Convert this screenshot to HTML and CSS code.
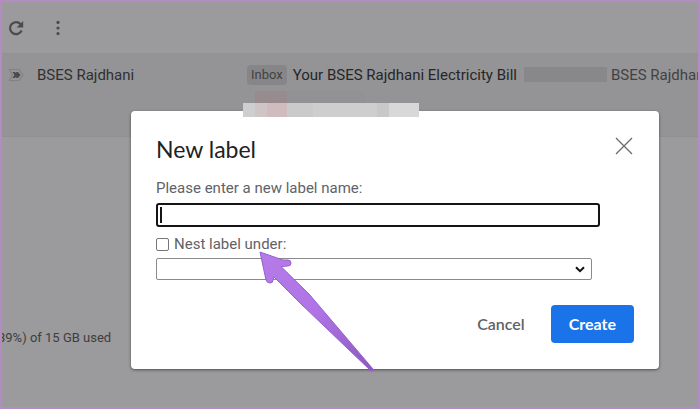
FILE: index.html
```
<!DOCTYPE html>
<html lang="en">
<head>
    <meta charset="UTF-8">
    <meta name="viewport" content="width=device-width, initial-scale=1.0">
    <title>New label</title>
    <link rel="stylesheet" href="styles.css">
</head>
<body>
    <div class="mail">
        <div class="toolbar">
            <button class="icon-button" type="button" aria-label="Refresh">
                <svg width="16" height="16" viewBox="0 0 16 16" fill="none">
                    <path d="M12.600 4.200A6 6 0 1 0 13.600 10.500" stroke="#4b4a4c" stroke-width="2.200"/>
                    <path d="M15.200 1v6.500H8.700z" fill="#4b4a4c"/>
                </svg>
            </button>
            <button class="icon-button" type="button" aria-label="More">
                <svg width="4" height="16" viewBox="0 0 4 16" fill="#4b4a4c">
                    <circle cx="2" cy="2.4" r="1.6"/>
                    <circle cx="2" cy="8" r="1.6"/>
                    <circle cx="2" cy="13.6" r="1.6"/>
                </svg>
            </button>
        </div>

        <div class="mail-row">
            <svg class="marker" width="16" height="14" viewBox="0 0 16 14" fill="none">
                <path d="M1.500 1.500h9.500L15 7l-4 5.500H1.500L4.500 7z" stroke="#828183" stroke-width="1.200"/>
                <path d="M4.500 4H7l1.200 1.500V4h1.800l2.500 3-2.500 3H8.200V8.500L7 10H4.500l2-3z" fill="#4b4a4c"/>
            </svg>
            <span class="sender">BSES Rajdhani</span>
            <span class="tag">Inbox</span>
            <span class="subject">Your BSES Rajdhani Electricity Bill</span>
            <span class="redacted"></span>
            <span class="snippet">BSES Rajdhani</span>
        </div>

        <div class="storage">39%) of 15 GB used</div>
    </div>

    <form class="dialog" role="dialog" aria-labelledby="dialog-title">
        <div class="dialog-header">
            <h1 id="dialog-title">New label</h1>
            <button class="icon-button" type="button" aria-label="Close">
                <svg width="18" height="18" viewBox="0 0 18 18" stroke="#6b6b6e" stroke-width="1.3">
                    <path d="M1 1l16 16M17 1L1 17"/>
                </svg>
            </button>
        </div>

        <label class="name-label" for="label-name">Please enter a new label name:</label>
        <div class="name-field">
            <input type="text" id="label-name" class="name-input">
            <span class="caret"></span>
        </div>

        <div class="nest">
            <input type="checkbox" id="nest" class="nest-check">
            <label for="nest">Nest label under:</label>
        </div>
        <div class="parent-field">
            <select class="parent-select" aria-label="Parent label">
                <option></option>
            </select>
            <svg class="chevron" width="10" height="7" viewBox="0 0 10 7" fill="none" stroke="#111" stroke-width="2">
                <path d="M1 1.200l4 4 4-4"/>
            </svg>
        </div>

        <div class="actions">
            <button class="btn" type="button">Cancel</button>
            <button class="btn btn-primary" type="button">Create</button>
        </div>
    </form>

    <!-- pixelated second line of the message -->
    <svg class="pixelated" width="176" height="26" viewBox="0 0 176 26" shape-rendering="crispEdges">
        <rect x="12" width="32" height="12" fill="#978b8d"/>
        <rect x="44" width="78" height="12" fill="#929294"/>
        <rect y="12" width="176" height="14" fill="#cececf"/>
        <rect x="12" y="12" width="12" height="14" fill="#cfc4c6"/>
        <rect x="24" y="12" width="20" height="14" fill="#d0bbbe"/>
        <rect x="44" y="12" width="26" height="14" fill="#cbcacb"/>
        <rect x="134" y="12" width="12" height="14" fill="#c8c8c9"/>
        <rect x="146" y="12" width="30" height="14" fill="#d8d8d9"/>
    </svg>

    <svg class="arrow" width="116" height="122" viewBox="0 0 116 122">
        <defs>
            <linearGradient id="arrow-fill" x1="0" y1="0" x2="1" y2="1">
                <stop offset="0" stop-color="#b57be8"/>
                <stop offset="0.500" stop-color="#b074e6"/>
                <stop offset="1" stop-color="#8a59bd"/>
            </linearGradient>
        </defs>
        <path d="M1 1L24 9L29 9Q32 9 32 12Q32 15 29 15L22 15.500L50 43L114 118Q115 121 112 120L40 51L15 26L14 29Q14 32 11 32Q8 32 7 29Z" fill="url(#arrow-fill)" stroke="#9760cd" stroke-width="1"/>
    </svg>
</body>
</html>
```

FILE: styles.css
```
* {
    box-sizing: border-box;
}
body {
    margin: 0;
    position: relative;
    font-family: Roboto, sans-serif;
    color: #5f6368;
    background-color: #9b9a9c;
}
.mail {
    display: flex;
    flex-direction: column;
    min-height: 100vh;
    border: 2px solid #b38cc4;
    overflow: hidden;
}
.toolbar {
    display: flex;
    align-items: center;
    gap: 32px;
    height: 51px;
    padding-left: 6px;
}
.icon-button {
    display: flex;
    padding: 0;
    border: none;
    background: none;
    cursor: pointer;
}
.mail-row {
    display: flex;
    align-items: flex-start;
    height: 84px;
    padding: 12px 0 0 6px;
    background-color: #949496;
    border-bottom: 1px solid #919193;
    font-size: 15px;
    line-height: 20px;
    white-space: nowrap;
}
.marker {
    margin-top: 3px;
    flex-shrink: 0;
}
.sender {
    width: 210px;
    margin-left: 13px;
    color: #303032;
    flex-shrink: 0;
}
.tag {
    padding: 0 4px;
    border-radius: 4px;
    background-color: #868688;
    color: #424244;
    font-size: 13px;
}
.subject {
    margin-left: 6px;
    color: #262628;
}
.redacted {
    width: 83px;
    height: 15px;
    margin: 2px 4px 0 7px;
    background-color: #88888a;
    flex-shrink: 0;
}
.snippet {
    color: #424244;
}
.storage {
    margin-top: auto;
    margin-bottom: 61px;
    margin-left: -4px;
    color: #3e3e40;
    font-size: 13px;
    line-height: 16px;
}
.dialog {
    position: absolute;
    top: 111px;
    left: 131px;
    right: 41px;
    padding: 24px 25px 26px;
    border-radius: 4px;
    background-color: #fff;
    box-shadow: 0 1px 3px rgba(0, 0, 0, 0.5);
    font-size: 15px;
}
.dialog-header {
    display: flex;
    align-items: flex-start;
    justify-content: space-between;
}
h1 {
    margin: 0;
    color: #202124;
    font-family: Lato, sans-serif;
    font-size: 23px;
    font-weight: 400;
    line-height: 28px;
}
.dialog-header .icon-button {
    padding: 2px 1px 0 0;
}
.name-label {
    display: block;
    margin: 15px 0 5px;
    line-height: 20px;
}
.name-field {
    position: relative;
    margin-right: 34px;
}
.name-input {
    display: block;
    width: 100%;
    height: 24px;
    padding: 0 6px;
    border: 2px solid #151518;
    border-radius: 3px;
    outline: none;
    font: inherit;
}
.caret {
    position: absolute;
    top: 4px;
    left: 4px;
    width: 2px;
    height: 16px;
    background-color: #151518;
}
.nest {
    display: flex;
    align-items: center;
    gap: 5px;
    margin: 7px 0 4px;
    line-height: 20px;
}
.nest-check {
    appearance: none;
    width: 13px;
    height: 13px;
    margin: 0;
    border: 1px solid #767676;
    border-radius: 2px;
}
.nest-check:checked {
    background-color: #1a73e8;
}
.parent-field {
    display: grid;
    align-items: center;
    margin-right: 42px;
}
.parent-select {
    grid-area: 1 / 1;
    appearance: none;
    width: 100%;
    height: 22px;
    border: 1px solid #8a8a8e;
    border-radius: 2px;
    background-color: #fff;
    font: inherit;
}
.chevron {
    grid-area: 1 / 1;
    justify-self: end;
    margin-right: 7px;
    pointer-events: none;
}
.actions {
    display: flex;
    justify-content: flex-end;
    gap: 8px;
    margin-top: 25px;
}
.btn {
    height: 38px;
    padding: 0 18px 2px;
    border: none;
    border-radius: 4px;
    background: none;
    color: #5f6368;
    font-family: Lato, sans-serif;
    font-size: 16px;
    font-weight: 600;
    cursor: pointer;
}
.btn-primary {
    background-color: #1a73e8;
    color: #fff;
    font-weight: 700;
}
.pixelated {
    position: absolute;
    top: 91px;
    left: 243px;
}
.arrow {
    position: absolute;
    top: 251px;
    left: 259px;
    pointer-events: none;
}
```
